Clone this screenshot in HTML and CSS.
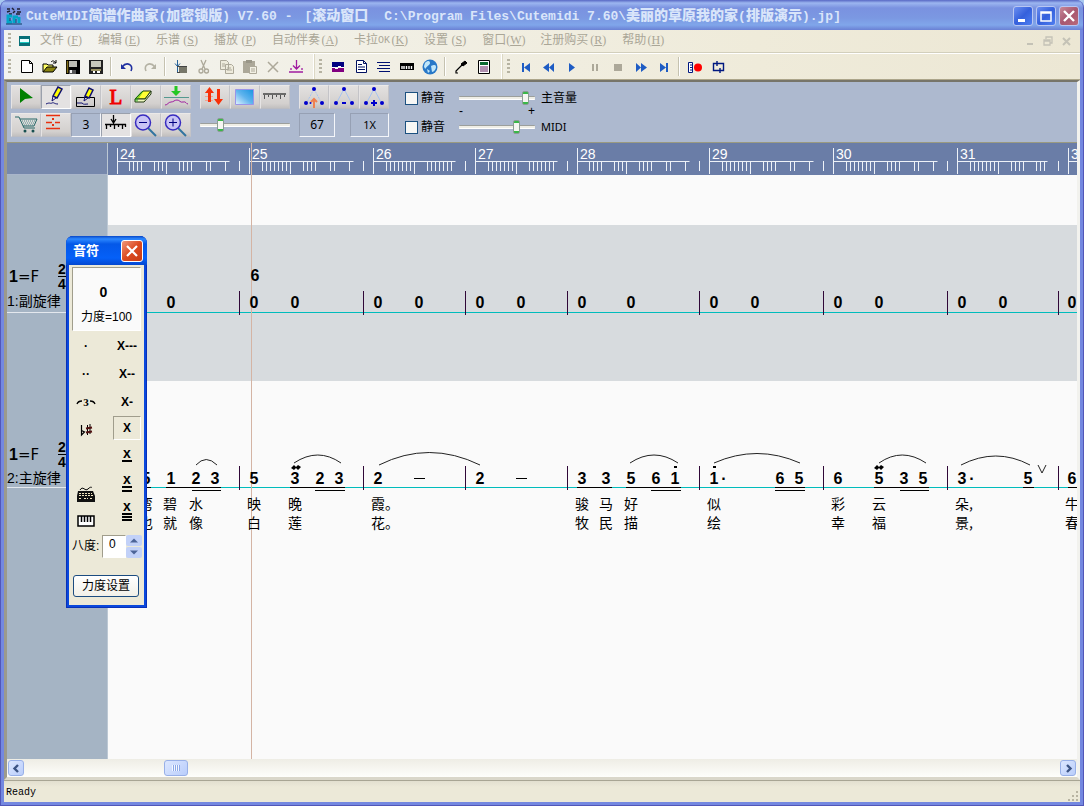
FILE: index.html
```html
<!DOCTYPE html>
<html lang="zh-CN">
<head>
<meta charset="utf-8">
<title>CuteMIDI简谱作曲家</title>
<link rel="stylesheet" href="styles.css">
</head>
<body>
<div class="window">
  <header class="titlebar">
    <svg class="app-icon" width="18" height="18" viewBox="0 0 18 18"><path d="M2 2h3M7 1l2 2M12 2h3M2 5l3-1M8 6l2-2M12 5h4M4 7h3M11 7h4" stroke="#223" stroke-width="1.5"/><path d="M7 9H3v6h4M9 16v-6h4M14 16v-6" fill="none" stroke="#00a6c8" stroke-width="3"/><path d="M5 11v3M11 12v4M1 17h16" stroke="#063a60"/></svg>
    <h1 class="title"><span>CuteMIDI<b>简谱作曲家</b>(<b>加密锁版</b>) V7.60 -</span><span>[<b>滚动窗口</b></span><span class="path">C:\Program Files\Cutemidi 7.60\<b>美丽的草原我的家</b>(<b>排版演示</b>).jp]</span></h1>
    <div class="caption-buttons">
      <button class="cap" aria-label="最小化"><svg width="18" height="18"><path d="M4 13.5h7" stroke="#fff" stroke-width="3"/></svg></button>
      <button class="cap" aria-label="最大化"><svg width="18" height="18"><path d="M4 5h10v9H4zM4 6h10" fill="none" stroke="#fff" stroke-width="1.5"/></svg></button>
      <button class="cap cap-close" aria-label="关闭"><svg width="18" height="18"><path d="M4 4l10 10M14 4L4 14" stroke="#fff" stroke-width="2.4"/></svg></button>
    </div>
  </header>

  <nav class="menubar">
    <i class="grip"></i>
    <svg class="doc-icon" width="12" height="10"><path d="M0 0h11v10H0z" fill="#087078"/><path d="M1 3h9v3H1z" fill="#e8ffff"/><path d="M1 6h9v1H1z" fill="#18c8c0"/></svg>
    <div class="menus">
      <button>文件<span>(<u>F</u>)</span></button><button>编辑<span>(<u>E</u>)</span></button><button>乐谱<span>(<u>S</u>)</span></button><button>播放<span>(<u>P</u>)</span></button><button>自动伴奏<span>(<u>A</u>)</span></button><button>卡拉<em>OK</em><span>(<u>K</u>)</span></button><button>设置<span>(<u>S</u>)</span></button><button>窗口<span>(<u>W</u>)</span></button><button>注册购买<span>(<u>R</u>)</span></button><button>帮助<span>(<u>H</u>)</span></button>
    </div>
    <div class="mdi">
      <button aria-label="最小化窗口"><svg width="18" height="16"><path d="M5 11h6" stroke="#c4c2b6" stroke-width="2"/></svg></button>
      <button aria-label="还原窗口"><svg width="18" height="16"><path d="M4 7h6v5H4zM6 6V4h6v6h-2M4 8h6" fill="none" stroke="#c4c2b6" stroke-width="1.3"/></svg></button>
      <button aria-label="关闭窗口"><svg width="18" height="16"><path d="M5 5l7 7M12 5l-7 7" stroke="#c4c2b6" stroke-width="2"/></svg></button>
    </div>
  </nav>

  <div class="toolbar">
    <i class="grip"></i>
    <div class="group">
      <button aria-label="新建"><svg width="16" height="16"><path d="M2.500 1.500h8l3 3v9h-11zM10.500 1.500v3h3" fill="#fff" stroke="#000"/></svg></button>
      <button aria-label="打开"><svg width="16" height="16"><path d="M1 13V5h4l1 1h5v3" fill="#ff6" stroke="#000"/><path d="M1 13l4-5h10l-4 5z" fill="#8a8410" stroke="#000"/><path d="M9 3c2-2 3-1 5 1M14 1v3h-3" fill="none" stroke="#000"/></svg></button>
      <button aria-label="保存"><svg width="16" height="16"><path d="M1 1h14v14H1z" fill="#000"/><path d="M2.500 2v12" stroke="#806e18" stroke-width="1.5"/><path d="M4 2h8v6H4z" fill="#bcbcb4"/><path d="M4 11h7v4H4z" fill="#555"/><path d="M5 11h2v3H5z" fill="#eee"/></svg></button>
      <button aria-label="保存为"><svg width="16" height="16"><path d="M1 1h14v14H1z" fill="#222"/><path d="M3 2h10v6H3z" fill="#c8c8bc"/><path d="M3 10h10v2H3z" fill="#9c9464"/><path d="M5 13h2M9 13h3" stroke="#fff" stroke-width="2"/></svg></button>
    </div>
    <i class="sep"></i>
    <div class="group">
      <button aria-label="撤销"><svg width="16" height="16"><path d="M3 8c5-6 12-2 9 4" fill="none" stroke="#2030a0" stroke-width="1.6"/><path d="M2 5v5h5z" fill="#2030a0"/></svg></button>
      <button aria-label="重做"><svg width="16" height="16"><path d="M13 8C8 2 1 6 4 12" fill="none" stroke="#b4b2a4" stroke-width="1.6"/><path d="M14 5v5H9z" fill="#b4b2a4"/></svg></button>
    </div>
    <i class="sep"></i>
    <div class="group">
      <button aria-label="插入"><svg width="16" height="16"><path d="M4.500 1v12M2 4.500l2.500 3 2.500-3" fill="none" stroke="#26629a"/><path d="M6 8h8v6H6z" fill="#77776a"/><path d="M4 7.500h10M4 13.500h3" stroke="#444"/></svg></button>
      <button aria-label="剪切"><svg width="16" height="16" fill="none" stroke="#aca899" stroke-width="1.3"><path d="M5 1l4 9M10 1L6 10"/><circle cx="5" cy="12" r="2"/><circle cx="10.500" cy="12" r="2"/></svg></button>
      <button aria-label="复制"><svg width="16" height="16" fill="#eeebdc" stroke="#aca899"><path d="M1.500 1.500h6l2 2v7h-8zM6.500 5.500h6l2 2v7h-8z"/><path d="M3 5h3M3 7h3M8 9h4M8 11h5"/></svg></button>
      <button aria-label="粘贴"><svg width="16" height="16"><path d="M1 2h12v12H1z" fill="#aca899"/><path d="M4 1h6v3H4z" fill="#999688"/><path d="M7.500 7.500h7v7h-7zM9 10h4M9 12h4" fill="#f2f0e4" stroke="#aca899"/></svg></button>
      <button aria-label="删除"><svg width="16" height="16"><path d="M3 3l10 10M13 3L3 13" stroke="#aca899" stroke-width="1.5"/></svg></button>
      <button aria-label="下移"><svg width="16" height="16" fill="none" stroke="#a01ca0" stroke-width="1.300"><path d="M8.500 1v9M5 6.500l3.500 3.500L12 6.500M1 13h14M3 11v-2M14 11v-2"/></svg></button>
    </div>
    <i class="group-end"></i><i class="grip"></i>
    <div class="group">
      <button aria-label="滚动窗口"><svg width="16" height="16"><path d="M2 3h12v5H2z" fill="#000080"/><path d="M2 9h12v4H2z" fill="#800080"/><path d="M2 8.500h3M8 7.500h3M5 9.500h3M11 8.500h3" stroke="#fff"/></svg></button>
      <button aria-label="页面"><svg width="16" height="16"><path d="M3.500 1.500h7l3 3v9h-10zM10.500 1.500v3h3M5 5.500h4M5 8h7M5 10.500h7" fill="#fff" stroke="#001060"/></svg></button>
      <button aria-label="列表"><svg width="16" height="16"><path d="M1 3.500h13M3 6.500h11M1 9.500h13M3 12.500h11" stroke="#001070"/></svg></button>
      <button aria-label="键盘"><svg width="16" height="16"><path d="M1 4h14v7H1z" fill="#000"/><path d="M3 7v3M5 7v3M7.500 7v3M10 7v3M12.500 7v3" stroke="#fff" stroke-width="1.400"/></svg></button>
      <button aria-label="网络"><svg width="16" height="16"><circle cx="8" cy="8" r="7.500" fill="#2878c8"/><path d="M3 4c3-3 5-2 5 0s-3 3-4 5-2-1-2-2zM9 7c4-2 5-1 5 1s-2 5-4 5zM5 10l3 2-2 2z" fill="#bfe6fa"/></svg></button>
    </div>
    <i class="sep"></i>
    <div class="group">
      <button aria-label="麦克风"><svg width="16" height="16"><path d="M9 6L3 12v2h2" fill="none" stroke="#000" stroke-width="1.200"/><path d="M8 5l4-3 2 2-4 3z" fill="#000" stroke="#000"/></svg></button>
      <button aria-label="歌词"><svg width="16" height="16"><path d="M2.500 1.500h11v13h-11z" fill="#fff" stroke="#000"/><path d="M4 3h8v3H4z" fill="#0a6a30"/><path d="M4 8h8M4 10h8M4 12h8" stroke="#602060"/></svg></button>
    </div>
    <i class="group-end"></i><i class="grip"></i>
    <div class="group play">
      <button aria-label="到开头"><svg width="16" height="16"><path d="M4 4h2v9H4zM12 4v9L6 8.500z"/></svg></button>
      <button aria-label="快退"><svg width="16" height="16"><path d="M8 4v9L2 8.500zM13 4v9L8 8.500z"/></svg></button>
      <button aria-label="播放"><svg width="16" height="16"><path d="M5 4v9l6-4.500z"/></svg></button>
      <button aria-label="暂停"><svg width="16" height="16"><path d="M5 5h2v7H5zM9 5h2v7H9z" fill="#aca899"/></svg></button>
      <button aria-label="停止"><svg width="16" height="16"><path d="M4 5h8v7H4z" fill="#aca899"/></svg></button>
      <button aria-label="快进"><svg width="16" height="16"><path d="M3 4v9l5-4.500zM8 4v9l6-4.500z"/></svg></button>
      <button aria-label="到结尾"><svg width="16" height="16"><path d="M4 4v9l6-4.500zM10 4h2v9h-2z"/></svg></button>
    </div>
    <i class="sep"></i>
    <div class="group">
      <button aria-label="录音"><svg width="16" height="16"><path d="M1.500 3.500h4v10h-4zM3 6h2M3 8.500h2M3 11h2" fill="#fff" stroke="#001880"/><circle cx="11" cy="8.500" r="4" fill="#f00"/></svg></button>
      <button aria-label="循环"><svg width="16" height="16"><path d="M5 4.500H3.500v7H7M10 4.500h3.500v7H11M7 2v5M10 9v5M5 4.500h5M7 11.500h4" fill="none" stroke="#001880" stroke-width="1.400"/></svg></button>
    </div>
  </div>

  <main class="client">
    <section class="tools">
      <div class="tool-grid main-tools">
        <button class="tool" aria-label="选择"><svg width="30" height="24"><path d="M9 3v15l5-4 8-1z" fill="#008000"/></svg></button>
        <button class="tool on" aria-label="铅笔"><svg width="30" height="24"><path d="M12 11l5-9 4 2-5 9z" fill="#ff0" stroke="#101070" stroke-width="1.500"/><path d="M12 11l-1 5 4-3M5 19c4-2 4 0 6-1s2 1 6 1" fill="none" stroke="#101070"/></svg></button>
        <button class="tool" aria-label="选区铅笔"><svg width="30" height="24"><path d="M5.500 12.500h18v9h-18z" fill="none" stroke="#000"/><path d="M14 11l4-8 4 2-4 8z" fill="#ff0" stroke="#101070" stroke-width="1.500"/><path d="M14 11l-1 5 4-3M6 18h5c2 2 3 1 6 1" fill="none" stroke="#101070"/></svg></button>
        <button class="tool letter">L</button>
        <button class="tool" aria-label="橡皮"><svg width="30" height="24"><path d="M4 14l8-8h8l-6 8z" fill="#ff3" stroke="#203810"/><path d="M4 14v3h9l7-8V6l-6 8z" fill="#eef8c0" stroke="#203810"/><path d="M10 6.500l3-1-6 9v2H4v-3z" fill="#18a018" opacity=".5"/></svg></button>
        <button class="tool" aria-label="力度曲线"><svg width="30" height="24"><path d="M15 1v7" stroke="#24c824" stroke-width="3"/><path d="M10 6h10l-5 5z" fill="#24c824"/><path d="M3 12.500h25" stroke="#559990"/><path d="M4 20c3 0 3-3 6-3s3-2 6-2 3 3 6 2 3 2 5 2" fill="none" stroke="#a020a0"/></svg></button>
        <button class="tool" aria-label="购物车"><svg width="30" height="24"><path d="M4 4h4l5 11h11M9 6h17l-3 7H12" fill="none" stroke="#286868"/><path d="M11 8h13M12 10h11M13 12h10" stroke="#508c8c" stroke-dasharray="1 1"/><circle cx="14" cy="18" r="1.500" fill="#185050"/><circle cx="22" cy="18" r="1.500" fill="#185050"/></svg></button>
        <button class="tool" aria-label="行距"><svg width="30" height="24"><path d="M5 2.500h14M5 9.500h6m3 0h5M5 15.500h14" stroke="#e83010" stroke-width="1.300"/><path d="M11 5h2v2h-2zM11 11h2v2h-2z" fill="#e83010"/></svg></button>
        <output class="field">3</output>
        <button class="tool on" aria-label="刻度"><svg width="30" height="24"><path d="M4 11.500h21M5.500 11v5M9.500 11v3M13.500 11v5M17.500 11v3M21.500 11v5M24.500 11v3M12.500 2v7M10 6l2.500 4L15 6" fill="none" stroke="#000" stroke-width="1.300"/></svg></button>
        <button class="tool" aria-label="缩小"><svg width="30" height="24"><path d="M17 15l8 8" stroke="#3074a0" stroke-width="2"/><circle cx="12" cy="9.500" r="7.500" fill="#c9c4f5" stroke="#382cc0" stroke-width="1.500"/><path d="M8 9.500h8" stroke="#000080"/></svg></button>
        <button class="tool" aria-label="放大"><svg width="30" height="24"><path d="M17 15l8 8" stroke="#3074a0" stroke-width="2"/><circle cx="12" cy="9.500" r="7.500" fill="#c9c4f5" stroke="#382cc0" stroke-width="1.500"/><path d="M8 9.500h8M12 5.500v8" stroke="#000080"/></svg></button>
      </div>
      <div class="stack">
        <div class="row">
          <button class="tool" aria-label="升降"><svg width="30" height="24"><path d="M5 7.500h8M5 11.500h8M5 15.500h8" stroke="#f4a090"/><path d="M9.500 17V6M18.500 4v11" stroke="#f83008" stroke-width="3"/><path d="M5 8l4.500-6L14 8zM14 14h9l-4.500 6z" fill="#f83008"/></svg></button>
          <button class="tool" aria-label="颜色"><svg width="30" height="24"><defs><linearGradient id="sky" x1="1" y1="0" x2="0" y2="1"><stop offset="0" stop-color="#1894e0"/><stop offset=".5" stop-color="#60b4ee"/><stop offset="1" stop-color="#e4f4ff"/></linearGradient></defs><path d="M5.500 4.500h18v15h-18z" fill="url(#sky)" stroke="#9a94e8"/></svg></button>
          <button class="tool" aria-label="标尺"><svg width="30" height="24"><path d="M3 9h23" stroke="#444" stroke-width="1.500"/><path d="M4.500 10v4M8.500 10v2M12.500 10v4M16.500 10v2M20.500 10v4M24.500 10v2" stroke="#555"/></svg></button>
        </div>
        <div class="row"><input class="range zoom-range" type="range" aria-label="缩放" min="0" max="100" value="21"></div>
      </div>
      <div class="stack">
        <div class="row">
          <button class="tool" aria-label="三点升"><svg width="30" height="24"><path d="M15 4l-7 13M15 4l7 13" stroke="#a8c4f0" stroke-dasharray="2 1"/><path d="M15 23v-8M12 17l3-3 3 3" fill="none" stroke="#f08050" stroke-width="2"/><g fill="#00c"><circle cx="15" cy="4" r="2"/><circle cx="7" cy="18" r="2"/><circle cx="11.500" cy="18" r="1"/><circle cx="23" cy="18" r="2"/></g></svg></button>
          <button class="tool" aria-label="三点"><svg width="30" height="24"><path d="M15 4l-7 13M15 4l7 13" stroke="#a8c4f0"/><path d="M13 18h4" stroke="#00c" stroke-width="2"/><g fill="#00c"><circle cx="15" cy="4" r="2"/><circle cx="7" cy="18" r="2"/><circle cx="23" cy="18" r="2"/></g></svg></button>
          <button class="tool" aria-label="三点加"><svg width="30" height="24"><path d="M15 4l-7 13M15 4l7 13" stroke="#a8c4f0"/><path d="M12 18h6M15 15v6" stroke="#00c" stroke-width="2"/><g fill="#00c"><circle cx="15" cy="4" r="2"/><circle cx="7" cy="18" r="2"/><circle cx="23" cy="18" r="2"/></g></svg></button>
        </div>
        <div class="row spread"><output class="field tempo">67</output><output class="field speed">1X</output></div>
      </div>
      <div class="volume">
        <div class="vol-row"><label><input type="checkbox">静音</label><input class="range" id="master" type="range" min="0" max="100" value="92"><label for="master">主音量</label></div>
        <div class="signs"><span>-</span><span>+</span></div>
        <div class="vol-row"><label><input type="checkbox">静音</label><input class="range" id="midi" type="range" min="0" max="100" value="78"><label for="midi">MIDI</label></div>
      </div>
    </section>

    <section class="score">
      <aside class="tracks">
        <div class="corner"></div>
        <div class="track first"><div class="key"><b>1</b><span>=F</span><span class="meter"><b>2</b><b>4</b></span></div><div class="name">1:副旋律</div></div>
        <div class="track second"><div class="key"><b>1</b><span>=F</span><span class="meter"><b>2</b><b>4</b></span></div><div class="name">2:主旋律</div></div>
      </aside>
      <svg class="canvas">
        <g transform="translate(-108 -143)">
          <path class="ruler-bg" d="M108 143h4000v32h-4000z"/>
          <path class="lane" d="M108 225h4000v156h-4000z"/>
          <g class="ruler">
            <path d="M117.500 148v26M117.500 161.500h112M129.500 161v10M133.500 161v10M137.500 161v10M141.500 161v10M154.500 161v10M158.500 161v10M162.500 161v10M166.500 161v13M179.500 161v10M183.500 161v10M187.500 161v10M191.500 161v10M206.500 161v10M210.500 161v10M225.500 161v10M239.500 161v10"/>
            <path id="bar4" d="M249.500 148v26M249.500 161.500h104M262.500 161v10M266.500 161v10M270.500 161v10M274.500 161v10M278.500 161v10M282.500 161v10M286.500 161v10M290.500 161v13M303.500 161v10M307.500 161v10M311.500 161v10M315.500 161v10M330.500 161v10M334.500 161v10M349.500 161v10M363.500 161v10"/>
            <path id="bar2" d="M373.500 148v26M373.500 161.500h82M386.500 161v10M390.500 161v10M394.500 161v10M398.500 161v10M402.500 161v10M406.500 161v10M410.500 161v10M414.500 161v13M427.500 161v10M431.500 161v10M435.500 161v10M439.500 161v10M443.500 161v10M447.500 161v10M451.500 161v10M465.500 161v10"/>
            <use href="#bar2" x="102"/>
            <path d="M577.500 148v26M577.500 161.500h112M589.500 161v10M593.500 161v10M597.500 161v10M601.500 161v10M614.500 161v10M618.500 161v10M622.500 161v10M626.500 161v13M639.500 161v10M643.500 161v10M647.500 161v10M651.500 161v10M666.500 161v10M670.500 161v10M685.500 161v10M699.500 161v10"/>
            <use href="#bar4" x="460"/><use href="#bar4" x="584"/>
            <path d="M957.500 148v26M957.500 161.500h90M970.500 161v10M974.500 161v10M978.500 161v10M982.500 161v10M986.500 161v10M990.500 161v10M994.500 161v10M998.500 161v13M1011.500 161v10M1015.500 161v10M1019.500 161v10M1023.500 161v10M1036.500 161v10M1040.500 161v10M1044.500 161v10M1058.500 161v10M1068.500 148v26M1068.500 161.500h40"/>
            <text x="120" y="159">24</text><text x="252" y="159">25</text><text x="376" y="159">26</text><text x="478" y="159">27</text><text x="580" y="159">28</text><text x="712" y="159">29</text><text x="836" y="159">30</text><text x="960" y="159">31</text><text x="1071" y="159">32</text>
          </g>
          <path class="staff" d="M108 312.500h4000M108 487.500h4000"/>
          <path class="playhead" d="M251.500 143v4000"/>
          <path class="bars" d="M239.500 291v24M363.500 291v24M465.500 291v24M567.500 291v24M699.500 291v24M823.500 291v24M947.500 291v24M1058.500 291v24M239.500 466v24M363.500 466v24M465.500 466v24M567.500 466v24M699.500 466v24M823.500 466v24M947.500 466v24M1058.500 466v24"/>
          <g class="notes">
            <text x="255" y="281">6</text>
            <text x="171" y="308">0</text><text x="254" y="308">0</text><text x="295" y="308">0</text><text x="378" y="308">0</text><text x="419" y="308">0</text><text x="480" y="308">0</text><text x="521" y="308">0</text><text x="582" y="308">0</text><text x="631" y="308">0</text><text x="714" y="308">0</text><text x="755" y="308">0</text><text x="838" y="308">0</text><text x="879" y="308">0</text><text x="962" y="308">0</text><text x="1003" y="308">0</text><text x="1072" y="308">0</text>
            <text x="146" y="484">5</text><text x="171" y="484">1</text><text x="196" y="484">2</text><text x="215" y="484">3</text><text x="254" y="484">5</text><text x="295" y="484">3</text><text x="320" y="484">2</text><text x="339" y="484">3</text><text x="378" y="484">2</text><text x="480" y="484">2</text><text x="582" y="484">3</text><text x="606" y="484">3</text><text x="631" y="484">5</text><text x="656" y="484">6</text><text x="675" y="484">1</text><text x="714" y="484">1</text><text x="724" y="484">·</text><text x="780" y="484">6</text><text x="799" y="484">5</text><text x="838" y="484">6</text><text x="879" y="484">5</text><text x="904" y="484">3</text><text x="923" y="484">5</text><text x="962" y="484">3</text><text x="972" y="484">·</text><text x="1028" y="484">5</text><text x="1072" y="484">6</text>
          </g>
          <path class="beams" d="M130 487.500h21M166 487.500h55M192 490.500h29M290 487.500h55M315 490.500h30M577 487.500h35M626 487.500h55M651 490.500h30M775 487.500h30M775 490.500h30M874 487.500h55M900 490.500h29M1023 487.500h11M1068 487.500h40M414 478.500h11M516 478.500h11"/>
          <path class="slurs" d="M196 465q10-11 21 0M294 463q24-16 47 0M379 465q50-25 101 0M630 463q24-16 48 0M714 463q43-19 86 0M879 463q23-16 47 0M961 465q35-18 69 0M1038 465l4 8 4-8"/>
          <path class="marks" d="M674 466h3v2h-3zM713 466h3v2h-3zM291 468l3-3 2 2 2-2 3 2-3 3-2-2-2 2zM874 468l3-3 2 2 2-2 3 2-3 3-2-2-2 2z"/>
          <g class="lyrics">
            <text x="139" y="509">弯</text><text x="163" y="509">碧</text><text x="189" y="509">水</text><text x="247" y="509">映</text><text x="288" y="509">晚</text><text x="371" y="509">霞。</text><text x="575" y="509">骏</text><text x="599" y="509">马</text><text x="624" y="509">好</text><text x="707" y="509">似</text><text x="831" y="509">彩</text><text x="872" y="509">云</text><text x="955" y="509">朵,</text><text x="1065" y="509">牛</text>
            <text x="139" y="528">也</text><text x="163" y="528">就</text><text x="189" y="528">像</text><text x="247" y="528">白</text><text x="288" y="528">莲</text><text x="371" y="528">花。</text><text x="575" y="528">牧</text><text x="599" y="528">民</text><text x="624" y="528">描</text><text x="707" y="528">绘</text><text x="831" y="528">幸</text><text x="872" y="528">福</text><text x="955" y="528">景,</text><text x="1065" y="528">春</text>
          </g>
        </g>
      </svg>
    </section>

    <div class="scrollbar">
      <button aria-label="向左滚动"><svg width="13" height="13"><path d="M8 3L4.500 6.500 8 10" fill="none" stroke="#3c5484" stroke-width="2.400"/></svg></button>
      <div class="rail"><div class="thumb"></div></div>
      <button aria-label="向右滚动"><svg width="13" height="13"><path d="M5 3l3.500 3.500L5 10" fill="none" stroke="#3c5484" stroke-width="2.400"/></svg></button>
    </div>
  </main>

  <footer class="status"><span>Ready</span><svg width="12" height="12" fill="#b8b4a2"><path d="M9 1h2v2H9zM5 5h2v2H5zM9 5h2v2H9zM1 9h2v2H1zM5 9h2v2H5zM9 9h2v2H9z"/></svg></footer>
</div>

<div class="palette" role="dialog" aria-label="音符">
  <div class="palette-title"><strong>音符</strong><button class="cap palette-close" aria-label="关闭音符"><svg width="18" height="18"><path d="M4 4l10 10M14 4L4 14" stroke="#fff" stroke-width="2.200"/></svg></button></div>
  <div class="palette-body">
    <div class="preview"><b>0</b><span>力度=100</span></div>
    <div class="values">
      <div class="col">
        <button>·</button>
        <button>··</button>
        <button aria-label="三连音"><svg width="22" height="14"><path d="M2 9q1-3 5-3M15 6q4 0 5 3" fill="none" stroke="#000" stroke-width="1.300"/><text x="11" y="11" class="triplet">3</text></svg></button>
        <button aria-label="升降号"><svg width="14" height="16"><path d="M2.500 3v10l3-3-3-1.500" fill="none" stroke="#000" stroke-width="1.200"/><path d="M8.500 3v10M11 2v10" stroke="#000"/><path d="M7 6.500l6-1M7 10.500l6-1" stroke="#501010" stroke-width="2"/></svg></button>
        <i class="blank"></i>
        <button class="device" aria-label="电脑键盘"><svg width="20" height="18"><path d="M4 4c3-5 5 2 8-1s3-1 4-2" fill="none" stroke="#000"/><path d="M2 5h15l2 5v6H1v-6z" fill="#111"/><path d="M3 7.500h13M3 9.500h14M3 12.500h3m2 0h4m2 0h3" stroke="#f4e8c0" stroke-dasharray="2 1"/></svg></button>
        <button class="device" aria-label="钢琴键盘"><svg width="20" height="14"><path d="M2 2h16v10H2z" fill="#fff" stroke="#000" stroke-width="1.500"/><path d="M5.500 2v6M8.500 2v6M11.500 2v6M14.500 2v6" stroke="#000" stroke-width="1.500"/></svg></button>
      </div>
      <div class="col">
        <button>X---</button>
        <button>X--</button>
        <button>X-</button>
        <button class="pressed">X</button>
        <button class="short">x<svg width="10" height="2"><path d="M0 1h10" stroke="#000" stroke-width="2"/></svg></button>
        <button class="short">x<svg width="10" height="6"><path d="M0 1h10M0 5h10" stroke="#000" stroke-width="2"/></svg></button>
        <button class="short">x<svg width="10" height="8"><path d="M0 1h10M0 4h10M0 7h10" stroke="#000" stroke-width="2"/></svg></button>
      </div>
    </div>
    <div class="octave"><label for="oct">八度:</label><input id="oct" type="text" value="0"><span class="spin"><button aria-label="增加"><svg width="16" height="11"><path d="M4 7.500L8 3.500l4 4z" fill="#4c6498"/></svg></button><button aria-label="减少"><svg width="16" height="11"><path d="M4 3.500l4 4 4-4z" fill="#4c6498"/></svg></button></span></div>
    <button class="velocity">力度设置</button>
  </div>
</div>
</body>
</html>
```

FILE: styles.css
```css
* { box-sizing: border-box; }
body {
  margin: 0;
  background: #a8c8f0;
  font: 12px/16px "Liberation Sans", "Noto Sans CJK SC", sans-serif;
  color: #000;
}
button { border: 0; padding: 0; background: none; font: inherit; color: inherit; }
svg { display: block; }

.window {
  display: flex;
  flex-direction: column;
  min-height: 100vh;
  padding: 0 3px 3px;
  border: 1px solid #5257b8;
  border-top: 0;
  border-radius: 8px 8px 0 0;
  background: #7488e0;
  overflow: hidden;
}

.titlebar {
  display: flex;
  align-items: center;
  height: 30px;
  margin: 0 -3px;
  padding: 2px 2px 0 4px;
  background: linear-gradient(#5868c4 0, #9cb6f0 3px, #7a92e0 8px, #7b98e2 18px, #80a6ea 25px, #6a80d4 30px);
}
.app-icon { flex: none; margin-right: 3px; }
.title {
  display: flex;
  flex: 1;
  gap: 12px;
  margin: 0;
  overflow: hidden;
  white-space: nowrap;
  color: #d9e5fa;
  font: bold 13px/20px "Liberation Mono", "Noto Sans CJK SC", monospace;
}
.title b { font-size: 14px; }
.title .path { margin-left: 4px; }
.caption-buttons { display: flex; gap: 3px; margin-right: 2px; }
.cap {
  width: 20px;
  height: 20px;
  border: 1px solid #b8c6f2;
  border-radius: 3px;
  background: linear-gradient(135deg, #6c8ff0, #3560dc 50%, #4e7ef0);
}
.cap-close { background: linear-gradient(135deg, #c88898, #a85870 50%, #b86878); }

.menubar, .toolbar {
  display: flex;
  align-items: center;
  background: linear-gradient(90deg, #f3f3ef, #efebda 70%, #ece7d4);
}
.menubar { height: 23px; border-bottom: 1px solid #d2cfbc; color: #aaa697; }
.grip {
  flex: none;
  width: 3px;
  height: 16px;
  margin-left: 4px;
  background: repeating-linear-gradient(#b6b3a2 0 2px, transparent 2px 4px);
}
.doc-icon { margin: 0 9px 0 8px; }
.menus { display: flex; flex: 1; gap: 16px; }
.menus button { display: flex; white-space: nowrap; }
.menus span { width: 18px; text-align: right; font-family: "Liberation Serif", serif; }
.menus em { font: 10px/18px "Liberation Mono", monospace; }
.mdi { display: flex; margin-right: 4px; }

.toolbar { height: 27px; border-top: 1px solid #fff; border-bottom: 1px solid #aca58a; }
.group { display: flex; }
.group button { display: flex; justify-content: center; width: 23px; }
.toolbar .grip + .group { margin-left: 4px; }
.sep { width: 2px; height: 19px; margin: 0 3px; border-left: 1px solid #c5c2b0; border-right: 1px solid #fff; }
.group-end { width: 2px; height: 25px; margin-left: 6px; border-left: 1px solid #fff; border-right: 1px solid #dcd8c4; }
.group-end + .grip { margin-left: 4px; }
.play { fill: #1e5cc4; }

.client {
  display: flex;
  flex: 1;
  flex-direction: column;
  border: solid;
  border-width: 2px 3px 3px;
  border-color: #77756a #f2f2ee #dad7ca #9c9a8c;
}

.tools {
  display: flex;
  height: 61px;
  padding: 3px 4px 5px;
  background: #adb9cf;
  border-bottom: 1px solid #9a9a80;
}
.tool-grid, .stack { display: grid; row-gap: 4px; margin-right: 9px; }
.main-tools { grid-template-columns: repeat(6, 30px); }
.row { display: flex; align-items: center; height: 24px; }
.spread { justify-content: space-between; }
.tool {
  width: 30px;
  height: 24px;
  background: linear-gradient(#e3e1e0, #d3d0ce 80%, #c2c0c0);
  border: 1px solid;
  border-color: #ebe9e8 #c4c4c8 #bbbcc2 #e6e4e4;
}
.tool svg { margin: -1px; }
.tool.on { background: #e4e2e2; border-color: #9aa0ac #fff #fff #9aa0ac; }
.letter { color: #f00000; font: 21px/20px "Liberation Serif", serif; -webkit-text-stroke: 1px #f00000; }
.field {
  height: 24px;
  border: 1px solid;
  border-color: #96a0b4 #f4f6fa #f4f6fa #96a0b4;
  text-align: center;
  font: 12px/22px "Noto Sans", sans-serif;
}
.tempo { width: 36px; }
.speed { width: 39px; font-size: 11px; }

.range { appearance: none; width: 76px; height: 15px; margin: 0; background: none; }
.zoom-range { width: 90px; }
.range::-webkit-slider-runnable-track {
  height: 4px;
  border-top: 1px solid #9c9f9c;
  border-bottom: 1px solid #fff;
  border-radius: 1px;
  background: #efeee6;
}
.range::-webkit-slider-thumb {
  appearance: none;
  width: 7px;
  height: 14px;
  margin-top: -6px;
  border: 1px solid #8c9c94;
  border-radius: 2px;
  background: linear-gradient(#38b848 2px, #f6f6f2 2px 10px, #38b848 10px);
}
.volume { display: flex; flex-direction: column; justify-content: space-between; margin-left: 7px; }
.vol-row { display: flex; align-items: center; height: 20px; margin-top: 3px; }
.vol-row label { display: flex; align-items: center; white-space: nowrap; }
.vol-row label:first-child { width: 54px; }
.vol-row label:last-child { margin-left: 6px; }
.vol-row label[for="midi"] { font: 11px/16px "Noto Sans", sans-serif; }
.vol-row input[type="checkbox"] {
  appearance: none;
  width: 13px;
  height: 13px;
  margin: 0 3px 0 0;
  border: 1px solid #1c5180;
  background: #f7f7f5;
}
.signs { display: flex; justify-content: space-between; width: 76px; height: 5px; margin-left: 54px; line-height: 5px; }

.score { display: flex; flex: 1; background: #fafafa; }
.tracks { width: 101px; background: #a5b4c4; border-right: 1px solid #bcc8d4; }
.corner { height: 32px; background: #7688ac; border-bottom: 1px solid #a9b5ca; }
.track {
  display: flex;
  flex-direction: column;
  justify-content: flex-end;
  border-bottom: 1px solid #e4e8ee;
}
.first { height: 138px; }
.second { height: 175px; }
.key { display: flex; align-items: center; padding-left: 2px; font-size: 16px; line-height: 24px; }
.key > span:nth-child(2) { width: 40px; font: 15px/24px "DejaVu Sans", sans-serif; }
.meter { display: flex; flex-direction: column; font-size: 14px; line-height: 14px; }
.meter b + b { border-top: 1px solid #000; }
.name { padding-bottom: 1px; font-size: 14px; line-height: 20px; white-space: nowrap; }
.second .name { padding: 0; line-height: 18px; }
.canvas { flex: 1; width: 0; min-width: 0; height: auto; overflow: hidden; }
.ruler-bg { fill: #6a7da7; }
.lane { fill: #d7dbde; }
.ruler { fill: none; stroke: #eef2f8; }
.ruler text { fill: #fff; stroke: none; font: 14px "Liberation Sans", sans-serif; }
.staff { fill: none; stroke: #00bcbc; }
.bars { stroke: #300838; }
.notes { font: bold 16px "Liberation Sans", sans-serif; text-anchor: middle; }
.beams { stroke: #000; }
.slurs { fill: none; stroke: #222; }
.marks { fill: #000; }
.lyrics { font: 14px "Noto Sans CJK SC", sans-serif; }
.playhead { fill: none; stroke: #d4b4a4; }

.scrollbar { display: flex; height: 18px; padding: 1px; background: linear-gradient(#eeede5, #fefefb); }
.scrollbar button, .thumb {
  display: flex;
  align-items: center;
  justify-content: center;
  width: 16px;
  height: 16px;
  border: 1px solid #98b0e8;
  border-radius: 3px;
  background: linear-gradient(135deg, #dce7ff, #b9cdfb);
}
.rail { flex: 1; }
.thumb { width: 24px; margin-left: 13.500%; }
.thumb::after { content: ""; width: 8px; height: 6px; background: repeating-linear-gradient(90deg, #f4f8ff 0 1px, #8ca8e8 1px 2px); }

.status {
  display: flex;
  align-items: center;
  justify-content: space-between;
  height: 22px;
  padding: 2px 1px 0 2px;
  border-top: 1px solid #a8a594;
  background: linear-gradient(#e2dfcf, #ece9d8 6px);
  font: 10px/20px "Liberation Mono", monospace;
}
.status svg { align-self: flex-end; }

.palette {
  position: absolute;
  left: 66px;
  top: 236px;
  width: 81px;
  padding: 0 3px 3px;
  border-radius: 7px 7px 0 0;
  background: #0a48dc;
  box-shadow: inset 0 0 0 1px #0830b8;
}
.palette-title {
  display: flex;
  align-items: center;
  justify-content: space-between;
  height: 29px;
  margin: 0 -3px;
  padding: 1px 4px 0 7px;
  border-radius: 7px 7px 0 0;
  background: linear-gradient(#0848c8, #2c88ff 3px, #0458e8 8px, #0560f8 22px, #0448d0);
  color: #fff;
  font-size: 13px;
}
.palette-close { width: 22px; height: 22px; border-color: #fff; background: linear-gradient(135deg, #f0987c, #dc4a20 50%, #c83c14); }
.palette-close svg { margin: 1px; }
.palette-body { padding: 2px 3px 8px; background: #ece9d8; }
.preview {
  display: flex;
  flex-direction: column;
  align-items: center;
  gap: 9px;
  height: 64px;
  padding-top: 16px;
  border: 1px solid;
  border-color: #a09d8c #fff #fff #a09d8c;
  background: #fafafa;
}
.preview b { margin-right: 6px; font: bold 14px/16px "Liberation Sans", sans-serif; }
.values { display: grid; grid-template-columns: 1fr 1fr; column-gap: 13px; padding-top: 1px; }
.col { display: flex; flex-direction: column; font-weight: bold; }
.col button, .blank {
  display: flex;
  flex-direction: column;
  align-items: center;
  justify-content: center;
  width: 28px;
  height: 28px;
}
.col .device { height: 26px; }
.col .pressed { height: 24px; border: 1px solid; border-color: #a09d8c #fff #fff #a09d8c; }
.col .short { gap: 1px; font-size: 14px; line-height: 12px; }
.col .blank { height: 38px; }
.triplet { font: bold 11px "Liberation Serif", serif; text-anchor: middle; }
.octave { display: flex; align-items: center; height: 24px; }
.octave label { width: 30px; white-space: nowrap; }
.octave input {
  width: 24px;
  height: 23px;
  padding: 0 0 4px 6px;
  border: 1px solid;
  border-color: #a09d8c #fff #fff #a09d8c;
  background: #fff;
  font: 12px "Liberation Sans", sans-serif;
}
.spin { display: grid; gap: 1px; margin-right: -2px; }
.spin button { width: 16px; height: 11px; border-radius: 2px; background: #c2d1f8; }
.velocity {
  width: 66px;
  height: 22px;
  margin: 17px 0 0 1px;
  border: 1px solid #1c4c80;
  border-radius: 3px;
  background: linear-gradient(#fff, #f2f0e8);
  white-space: nowrap;
}
```
